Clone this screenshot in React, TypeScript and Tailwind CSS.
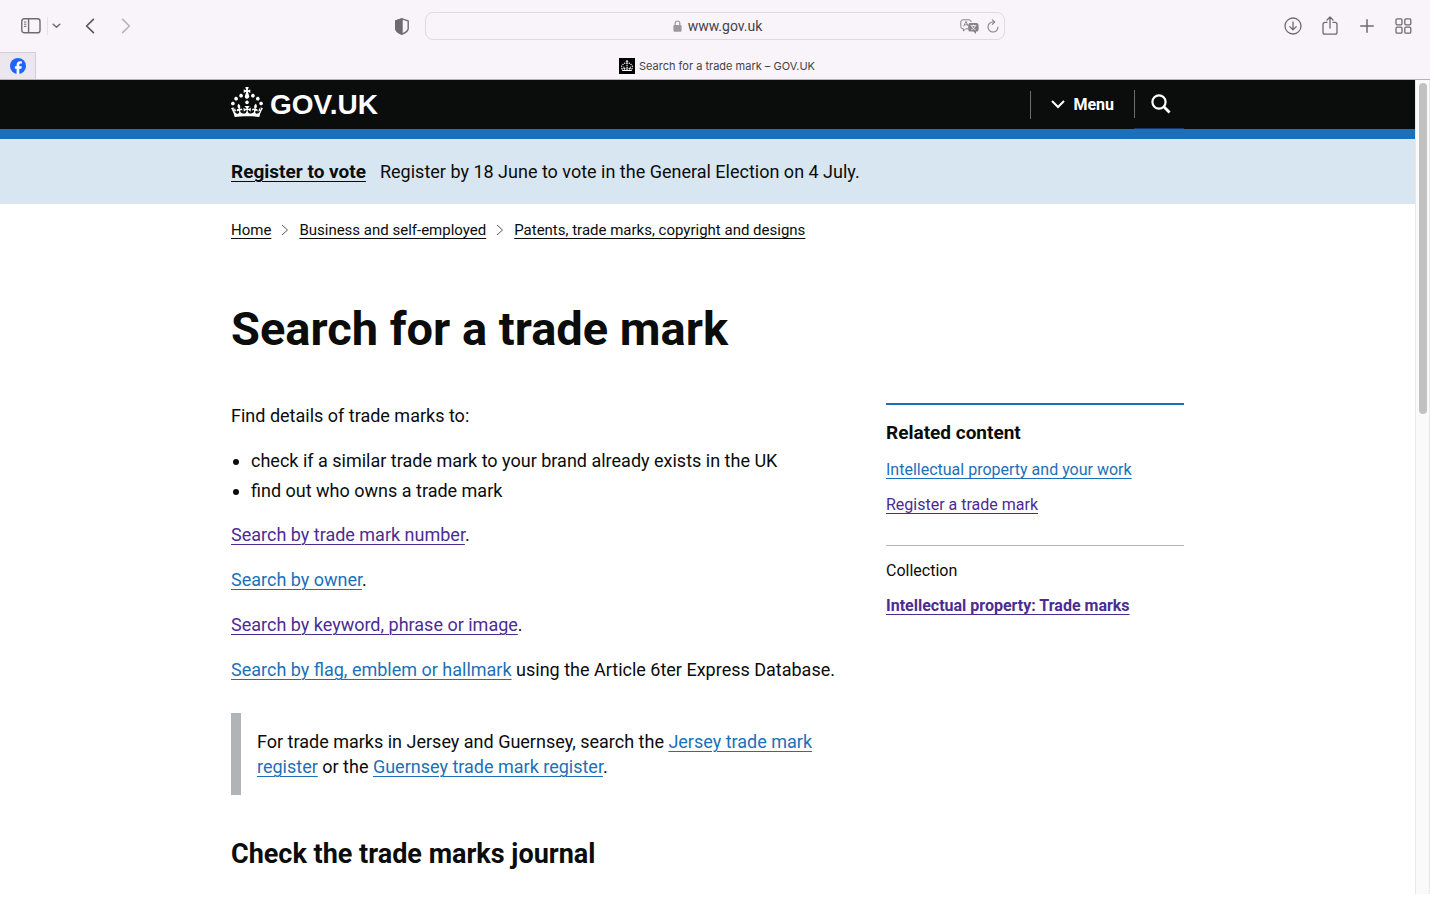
import type { ReactNode } from "react";
import clsx from "clsx";

const Crown = ({ className }: { className: string }) => (
  <svg viewBox="0 0 32 30" fill="currentColor" fillRule="evenodd" className={className} aria-hidden="true">
    <path d="M22.6 10.4c-1 .4-2-.1-2.4-1-.4-.9.1-2 1-2.4.9-.4 2 .1 2.4 1s-.1 2-1 2.4m-5.9 6.7c-.9.4-2-.1-2.4-1-.4-.9.1-2 1-2.4.9-.4 2 .1 2.4 1s-.1 2-1 2.4m10.8-3.7c-1 .4-2-.1-2.4-1-.4-.9.1-2 1-2.4.9-.4 2 .1 2.4 1s0 2-1 2.4m3.3 4.8c-1 .4-2-.1-2.4-1-.4-.9.1-2 1-2.4.9-.4 2 .1 2.4 1s-.1 2-1 2.4M17 4.7l2.3 1.2V2.5l-2.3.7-.2-.2.9-3h-3.4l.9 3-.2.2c-.1.1-2.3-.7-2.3-.7v3.4L15 4.7c.1.1.1.2.2.2l-1.3 4c-.1.2-.1.4-.1.6 0 1.1.8 2 1.9 2.2h.7c1-.2 1.9-1.1 1.9-2.1 0-.2 0-.4-.1-.6l-1.3-4c-.1-.2 0-.2.1-.3m-7.6 5.7c.9.4 2-.1 2.4-1 .4-.9-.1-2-1-2.4-.9-.4-2 .1-2.4 1s0 2 1 2.4m-5 3c.9.4 2-.1 2.4-1 .4-.9-.1-2-1-2.4-.9-.4-2 .1-2.4 1s.1 2 1 2.4m-3.2 4.8c.9.4 2-.1 2.4-1 .4-.9-.1-2-1-2.4-.9-.4-2 .1-2.4 1s0 2 1 2.4m14.8 11c4.4 0 8.6.3 12.3.8 1.1-4.5 2.4-7 3.7-8.8l-2.5-.9c.2 1.3.3 1.9 0 2.7-.4-.4-.8-1.1-1.1-2.3l-1.2 4c.7-.5 1.3-.8 2-.9-1.1 2.5-2.6 3.1-3.5 3-1.1-.2-1.7-1.2-1.5-2.1.3-1.2 1.5-1.5 2.1-.1 1.1-2.3-.8-3-2-2.3 1.9-1.9 2.1-3.5.6-5.6-2.1 1.6-2.1 3.2-1.2 5.5-1.2-1.4-3.2-.6-2.5 1.6.9-1.4 2.1-.5 1.9.8-.2 1.1-1.7 2.1-3.5 1.9-2.7-.2-2.9-2.1-2.9-3.6.7-.1 1.9.5 2.9 1.9l.4-4.3c-1.1 1.1-2.1 1.4-3.2 1.4.4-1.2 2.1-3 2.1-3h-5.4s1.7 1.9 2.1 3c-1.1 0-2.1-.2-3.2-1.4l.4 4.3c1-1.4 2.2-2 2.9-1.9-.1 1.5-.2 3.4-2.9 3.6-1.9.2-3.4-.8-3.5-1.9-.2-1.3 1-2.2 1.9-.8.7-2.3-1.2-3-2.5-1.6.9-2.2.9-3.9-1.2-5.5-1.5 2-1.3 3.7.6 5.6-1.2-.7-3.1 0-2 2.3.6-1.4 1.8-1.1 2.1.1.2.9-.3 1.9-1.5 2.1-.9.2-2.4-.5-3.5-3 .6 0 1.2.3 2 .9l-1.2-4c-.3 1.1-.7 1.9-1.1 2.3-.3-.8-.2-1.4 0-2.7l-2.9.9C1.3 23 2.6 25.5 3.7 30c3.7-.5 7.9-.8 12.3-.8" />
  </svg>
);

const tones = {
  blue: "text-[#1d70b8]",
  visited: "text-[#4c2c92]",
  black: "text-[#0b0c0c]",
};

type LinkProps = { tone?: keyof typeof tones; bold?: boolean; children: ReactNode };

const TextLink = ({ tone = "blue", bold, children }: LinkProps) => (
  <a href="#" className={clsx("underline decoration-1 underline-offset-[3px]", tones[tone], bold && "font-bold")}>
    {children}
  </a>
);

const Toolbar = () => (
  <div className="flex h-[52px] items-center text-[#6f6a70]">
    <div className="flex flex-1 items-center pl-2">
      <button aria-label="Sidebar" className="ml-[13px]">
        <svg width="20" height="16" viewBox="0 0 20 16" fill="none" stroke="currentColor" strokeWidth="1.4">
          <rect x="0.8" y="0.8" width="18.2" height="14" rx="2.4" />
          <path d="M7.6 1v13.6" />
          <path d="M3 4h2.4M3 6.2h2.4M3 8.4h2.4" strokeWidth="1" />
        </svg>
      </button>
      <span className="ml-1.5 h-[18px] w-px bg-[#e6e1e8]" />
      <button aria-label="Tab groups" className="ml-1">
        <svg width="9" height="6" viewBox="0 0 9 6" fill="none" stroke="currentColor" strokeWidth="1.5" strokeLinecap="round" strokeLinejoin="round">
          <path d="M1.2 1.2l3.3 3 3.3-3" />
        </svg>
      </button>
      <button aria-label="Back" className="ml-6 text-[#5b575d]">
        <svg width="10" height="16" viewBox="0 0 10 16" fill="none" stroke="currentColor" strokeWidth="1.7" strokeLinecap="round" strokeLinejoin="round">
          <path d="M8.4 1.4L1.6 8l6.8 6.6" />
        </svg>
      </button>
      <button aria-label="Forward" className="ml-[26px] text-[#b9b5bb]">
        <svg width="10" height="16" viewBox="0 0 10 16" fill="none" stroke="currentColor" strokeWidth="1.7" strokeLinecap="round" strokeLinejoin="round">
          <path d="M1.6 1.4L8.4 8l-6.8 6.6" />
        </svg>
      </button>
      <button aria-label="Privacy report" className="mr-4 ml-auto">
        <svg width="14" height="17" viewBox="0 0 14 17" fill="none" stroke="currentColor" strokeWidth="1.4" strokeLinejoin="round">
          <path d="M7 .8l6.2 2.1v7.6c0 2.5-3.5 4.6-6.2 5.7-2.7-1.1-6.2-3.2-6.2-5.7V2.9z" />
          <path d="M7 .8v15.4C4.3 15.1.8 13 .8 10.5V2.9z" fill="currentColor" />
        </svg>
      </button>
    </div>

    <div className="flex h-7 w-[40.5%] items-center rounded-lg border border-[#dfdae1] px-[5px]">
      <div className="flex flex-1 items-center justify-center gap-1.5 pl-11">
        <svg width="9" height="12" viewBox="0 0 9 12" fill="none" className="text-[#9c989e]">
          <rect x="0.4" y="5" width="8.2" height="6.8" rx="1.2" fill="currentColor" />
          <path d="M2.2 5.5V3.3a2.3 2.3 0 014.6 0v2.2" stroke="currentColor" strokeWidth="1.2" />
        </svg>
        <span className="font-['Roboto',sans-serif] text-sm leading-4 text-[#454247]">www.gov.uk</span>
      </div>
      <div className="flex items-center gap-2 text-[#858187]">
        <button aria-label="Translate">
          <svg width="19" height="15" viewBox="0 0 19 15" fill="none">
            <path d="M8 9.8H5.8L3.4 12V9.8H3A2.2 2.2 0 01.8 7.6V3A2.2 2.2 0 013 .8h6A2.2 2.2 0 0111.2 3" stroke="currentColor" />
            <path d="M3.6 7.5L6 2.4l2.2 4.8M4.4 5.8h3" stroke="currentColor" strokeWidth="0.9" />
            <path d="M10.4 4h6a2.2 2.2 0 012.2 2.2v4.2a2.2 2.2 0 01-2.2 2.2h-.4V15l-2.6-2.4h-3a2.2 2.2 0 01-2.2-2.2V6.2A2.2 2.2 0 0110.4 4z" fill="currentColor" />
            <path d="M10.6 6.7h5.6M13.4 5.6v1.1M11.6 6.9c.6 1.8 2 3.2 4 4M15.2 6.9c-.6 1.8-2 3.2-4 4" stroke="#f8f4fa" strokeWidth="0.9" />
          </svg>
        </button>
        <button aria-label="Reload">
          <svg width="12" height="14" viewBox="0 0 12 14" fill="none" stroke="currentColor" strokeWidth="1.1" strokeLinecap="round" strokeLinejoin="round">
            <path d="M7.5 3H6a5 5 0 105 5" />
            <path d="M5.3.8L7.7 3 5.3 5.3" />
          </svg>
        </button>
      </div>
    </div>

    <div className="flex flex-1 justify-end pr-2">
      <button aria-label="Downloads" className="flex w-[37px] items-center justify-center">
        <svg width="18" height="18" viewBox="0 0 18 18" fill="none" stroke="currentColor" strokeWidth="1.3" strokeLinecap="round" strokeLinejoin="round">
          <circle cx="9" cy="9" r="8" />
          <path d="M9 5v7.6M5.8 9.6L9 12.8l3.2-3.2" />
        </svg>
      </button>
      <button aria-label="Share" className="flex w-[37px] items-center justify-center">
        <svg width="16" height="20" viewBox="0 0 16 20" fill="none" stroke="currentColor" strokeWidth="1.3" strokeLinecap="round" strokeLinejoin="round">
          <path d="M5 6.4H3a2 2 0 00-2 2v7.8a2 2 0 002 2h10a2 2 0 002-2V8.4a2 2 0 00-2-2h-2" />
          <path d="M8 12V1.2M5 4l3-3 3 3" />
        </svg>
      </button>
      <button aria-label="New tab" className="flex w-[37px] items-center justify-center">
        <svg width="14" height="14" viewBox="0 0 14 14" fill="none" stroke="currentColor" strokeWidth="1.5" strokeLinecap="round">
          <path d="M7 .8v12.4M.8 7h12.4" />
        </svg>
      </button>
      <button aria-label="Tab overview" className="flex w-[37px] items-center justify-center">
        <svg width="17" height="16" viewBox="0 0 17 16" fill="none" stroke="currentColor" strokeWidth="1.3">
          <rect x="1" y="0.8" width="6" height="6" rx="1.2" />
          <rect x="9.8" y="0.8" width="6" height="6" rx="1.2" />
          <rect x="1" y="9.2" width="6" height="6" rx="1.2" />
          <rect x="9.8" y="9.2" width="6" height="6" rx="1.2" />
        </svg>
      </button>
    </div>
  </div>
);

const TabStrip = () => (
  <div className="flex h-7 border-b border-[#b5b1b7]">
    <button aria-label="Facebook" className="flex w-9 items-center justify-center border-t border-r border-[#d3ced5] bg-[#ece7ee]">
      <svg width="16" height="16" viewBox="0 0 16 16">
        <circle cx="8" cy="8" r="8" fill="#1f64ff" />
        <path d="M6.6 16v-5.3H4.9V8.2h1.7V7.1c0-2.7 1.2-3.9 3.7-3.9.5 0 1.2.1 1.6.2v2.2h-.9c-1.2 0-1.7.5-1.7 1.7v.9h2.5l-.4 2.5H9.3v5.2z" fill="#fff" />
      </svg>
    </button>
    <div className="flex flex-1 items-center justify-center gap-1 pr-8">
      <span className="flex size-4 items-center justify-center bg-black text-white">
        <Crown className="w-3" />
      </span>
      <span className="text-[11px] leading-4 text-[#454247]">Search for a trade mark – GOV.UK</span>
    </div>
  </div>
);

const container = "mx-auto w-full max-w-[953px]";

const SiteHeader = () => (
  <header className="border-b-10 border-[#1d70b8] bg-[#0b0c0c] text-white">
    <div className={clsx(container, "flex h-[49px] items-center justify-between")}>
      <a href="#" aria-label="GOV.UK" className="flex items-center gap-[7px]">
        <Crown className="mb-1.5 w-8" />
        <span className="font-['Liberation_Sans',sans-serif] text-[28px] leading-8 font-bold">GOV.UK</span>
      </a>
      <div className="flex items-center self-stretch">
        <button className="flex h-7 items-center gap-2 border-l border-[#6b6e70] px-5 font-bold">
          <svg width="14" height="9" viewBox="0 0 14 9" fill="none" stroke="currentColor" strokeWidth="2">
            <path d="M1 1l6 6 6-6" />
          </svg>
          Menu
        </button>
        <button aria-label="Search GOV.UK" className="flex w-[50px] items-center self-stretch border-b border-[#14386e]">
          <span className="flex h-7 items-center border-l border-[#6b6e70] pl-4">
            <svg width="20" height="20" viewBox="0 0 20 20" fill="none" stroke="currentColor" strokeWidth="2.2">
              <circle cx="8" cy="8" r="6.6" />
              <path d="M12.8 12.8l5.8 5.8" strokeWidth="2.8" />
            </svg>
          </span>
        </button>
      </div>
    </div>
  </header>
);

const crumbs = ["Home", "Business and self-employed", "Patents, trade marks, copyright and designs"];

const Breadcrumbs = () => (
  <nav aria-label="Breadcrumb" className={clsx(container, "pt-4")}>
    <ol className="flex items-center text-[15px] leading-5">
      {crumbs.map((crumb, i) => (
        <li key={crumb} className="flex items-center">
          {i > 0 && (
            <svg width="8" height="12" viewBox="0 0 8 12" fill="none" stroke="#505a5f" className="mx-[10px]">
              <path d="M1 1l5.5 5L1 11" />
            </svg>
          )}
          <TextLink tone="black">{crumb}</TextLink>
        </li>
      ))}
    </ol>
  </nav>
);

const RelatedContent = () => (
  <aside className="w-[298px] shrink-0 border-t-2 border-[#1d70b8] text-base leading-5">
    <h2 className="mt-4 text-[19px] leading-6 font-bold">Related content</h2>
    <ul className="mt-[15px] flex flex-col gap-[15px]">
      <li>
        <TextLink>Intellectual property and your work</TextLink>
      </li>
      <li>
        <TextLink tone="visited">Register a trade mark</TextLink>
      </li>
    </ul>
    <h3 className="mt-[30px] border-t border-[#b1b4b6] pt-[15px]">Collection</h3>
    <p className="mt-[15px]">
      <TextLink tone="visited" bold>
        Intellectual property: Trade marks
      </TextLink>
    </p>
  </aside>
);

export default function App() {
  return (
    <div className="flex min-h-screen flex-col bg-white font-['Roboto',sans-serif] text-[#0b0c0c]">
      <div className="bg-[#f8f4fa] font-['Inter',sans-serif]">
        <Toolbar />
        <TabStrip />
      </div>

      <div className="flex flex-1 pb-1">
        <div className="min-w-0 flex-1">
          <SiteHeader />
          <section aria-label="Election notice" className="bg-[#d8e6f1] py-5">
            <p className={clsx(container, "flex gap-[14px] text-lg leading-[25px]")}>
              <span className="text-[19px]">
                <TextLink tone="black" bold>
                  Register to vote
                </TextLink>
              </span>
              Register by 18 June to vote in the General Election on 4 July.
            </p>
          </section>
          <Breadcrumbs />

          <main className={clsx(container, "pt-16")}>
            <h1 className="text-[47px] leading-[50px] font-bold">Search for a trade mark</h1>
            <div className="mt-[49px] flex justify-between">
              <div className="w-[625px] text-lg leading-[25px]">
                <p>Find details of trade marks to:</p>
                <ul className="mt-5 mb-[19px] flex list-disc flex-col gap-[5px] pl-5">
                  <li>check if a similar trade mark to your brand already exists in the UK</li>
                  <li>find out who owns a trade mark</li>
                </ul>
                <div className="flex flex-col gap-5">
                  <p>
                    <TextLink tone="visited">Search by trade mark number</TextLink>.
                  </p>
                  <p>
                    <TextLink>Search by owner</TextLink>.
                  </p>
                  <p>
                    <TextLink tone="visited">Search by keyword, phrase or image</TextLink>.
                  </p>
                  <p>
                    <TextLink>Search by flag, emblem or hallmark</TextLink> using the Article 6ter Express Database.
                  </p>
                </div>
                <div className="mt-[31px] border-l-10 border-[#b1b4b6] p-4">
                  <p>
                    For trade marks in Jersey and Guernsey, search the <TextLink>Jersey trade mark register</TextLink> or
                    the <TextLink>Guernsey trade mark register</TextLink>.
                  </p>
                </div>
                <h2 className="mt-11 text-[27px] leading-[30px] font-bold">Check the trade marks journal</h2>
              </div>
              <RelatedContent />
            </div>
          </main>
        </div>

        <div aria-hidden="true" className="w-[15px] border-x border-[#e8e8e8] bg-[#fafafa] pt-[3px] pl-[3px]">
          <div className="h-[331px] w-2 rounded-full bg-[#c1c1c1]" />
        </div>
      </div>
    </div>
  );
}
